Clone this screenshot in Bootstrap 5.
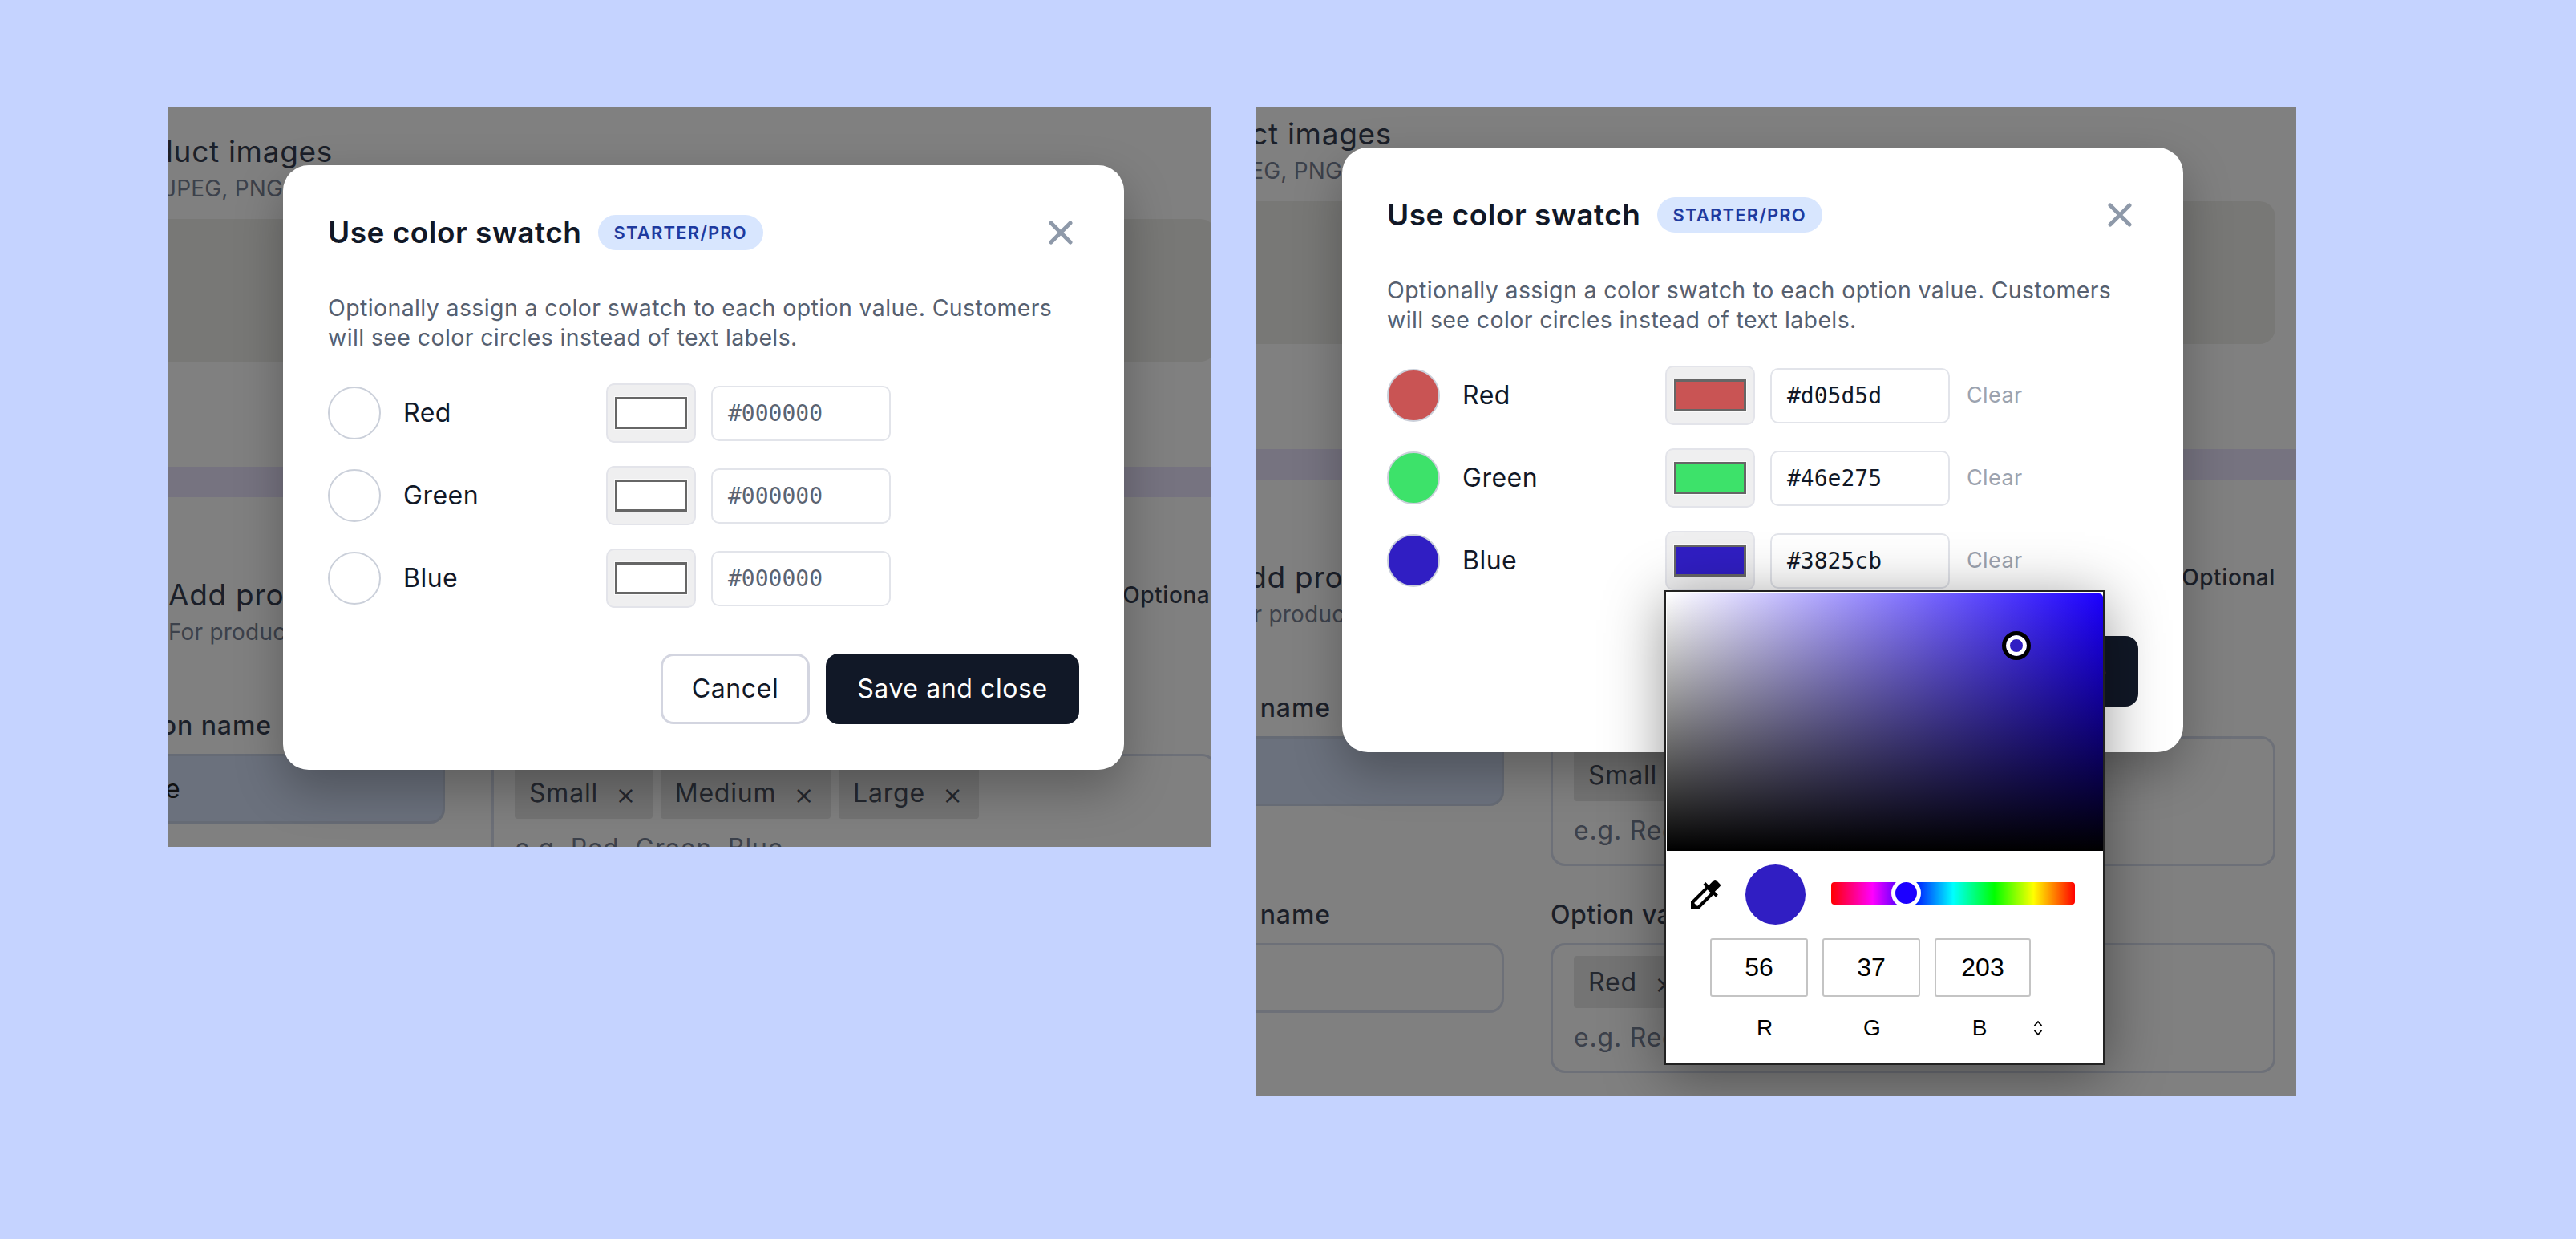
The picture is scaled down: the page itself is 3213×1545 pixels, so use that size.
<!DOCTYPE html>
<html lang="en">
<head>
  <meta charset="UTF-8" />
  <meta name="viewport" content="width=device-width, initial-scale=1.0" />
  <title>Use color swatch</title>
  <link href="https://cdn.jsdelivr.net/npm/bootstrap@5.3.0/dist/css/bootstrap.min.css" rel="stylesheet" />
  <style>
    body {
      background: #c5d3ff;
      font-family: "Inter", "Liberation Sans", sans-serif;
      color: #111827;
      height: 1545px;
      overflow: hidden;
      padding: 133px 0 0 210px;
      gap: 56px;
    }

    /* dimmed page behind each dialog */
    .shot { position: relative; overflow: hidden; background: #808080; flex: none; }
    .shot-a { width: 1300px; height: 923px; }
    .shot-b { width: 1298px; height: 1234px; }
    .pg { width: 1307px; padding-top: 34px; }
    .shot-b .pg { margin: -22px 0 0 -35px; }
    .pg-title { font-size: 37px; line-height: 44px; letter-spacing: .7px; color: #1b1f29; white-space: nowrap; }
    .pg-sub { font-size: 28px; line-height: 37px; letter-spacing: .2px; margin-top: 6px; color: #3c414b; white-space: nowrap; }
    .pg-images { margin-left: -78px; }
    .pg-sub.pg-images { margin-left: -110px; }
    .pg-dropzone { height: 178px; margin: 19px 0 0 -100px; background: #787876; border-radius: 20px; }
    .pg-band { height: 38px; margin: 131px -100px 100px -100px; background: #767380; }
    .pg-optional { font-size: 28px; font-weight: 500; line-height: 44px; letter-spacing: .6px; color: #1b1f29; }
    .pg-grid { display: grid; grid-template-columns: 412px 1fr; column-gap: 58px; margin: 78px 0 41px -67px; }
    .pg-grid + .pg-grid { margin-top: 0; }
    .pg-label { font-size: 32px; font-weight: 500; line-height: 40px; letter-spacing: .5px; color: #1b1f29; margin-bottom: 15px; white-space: nowrap; }
    .pg-name { margin-left: -9px; letter-spacing: .9px; }
    .pg-input { height: 87px; border: 3px solid #6d7078; border-radius: 18px; padding: 0 12px; font-size: 32px; line-height: 81px; letter-spacing: .8px; color: #111; }
    .pg-input-filled { background: #6b717d; border-color: #666b75; }
    .pg-tags { height: 162px; border: 3px solid #6d7078; border-radius: 18px; padding: 13px 26px; font-size: 32px; line-height: 40px; letter-spacing: .8px; color: #3c414b; }
    .pg-chips { gap: 10px; }
    .pg-chip { height: 65px; padding: 0 20px 0 18px; background: #747474; color: #25282f; border-radius: 4px; white-space: nowrap; }
    .pg-chip i { font-style: normal; font-size: 38px; font-weight: 300; margin-left: 22px; }
    .pg-hint { margin-top: 17px; white-space: nowrap; }

    /* dialog */
    .sw-dialog {
      position: absolute;
      width: 1049px;
      padding: 62px 56px 57px;
      background: #fff;
      border: 0;
      border-radius: 32px;
      box-shadow: 0 24px 60px rgba(0, 0, 0, .28);
    }
    .shot-a .sw-dialog { left: 143px; top: 73px; }
    .shot-b .sw-dialog { left: 108px; top: 51px; }
    .sw-title { font-size: 37px; font-weight: 600; line-height: 44px; letter-spacing: .5px; margin: 0; }
    .sw-tier {
      background: #d8e6fe;
      color: #1e3a9f;
      font-size: 22px;
      font-weight: 600;
      line-height: 44px;
      padding: 0 20px;
      margin-left: 20px;
      letter-spacing: 1.2px;
    }
    .sw-close { width: 30px; height: 30px; margin-left: auto; margin-right: 8px; }
    .sw-desc { font-size: 28.5px; line-height: 37px; letter-spacing: .38px; color: #566070; margin: 53px 0 39px; }
    .sw-rows { gap: 29px; }
    .sw-row { height: 74px; }
    .sw-dot { width: 66px; height: 66px; border: 2px solid #cbd0da; border-radius: 50%; flex: none; }
    .sw-name { width: 253px; margin-left: 28px; font-size: 32px; letter-spacing: .5px; flex: none; }
    .sw-well {
      width: 112px;
      height: 74px;
      background: #efeff0;
      border: 2px solid #e3e4ea;
      border-radius: 10px;
      padding: 15px 9px;
      flex: none;
    }
    .sw-fill { display: block; height: 100%; background: #fff; border: 3px solid #666; box-shadow: 0 0 0 1px #fafafa; }
    .sw-hex {
      width: 224px;
      height: 69px;
      margin-left: 19px;
      padding: 0 19px;
      border: 2px solid #e2e4ea;
      border-radius: 10px;
      font-family: "DejaVu Sans Mono", "Liberation Mono", monospace;
      font-size: 28px;
      line-height: 65px;
      color: #5b6473;
    }
    .sw-hex.is-set { color: #111827; }
    .sw-clear { margin-left: 21px; font-size: 27px; letter-spacing: .4px; color: #9ca3af; }
    .sw-foot { gap: 20px; margin-top: 57px; }
    .sw-btn { height: 88px; font-size: 32px; line-height: 1; letter-spacing: .6px; border-radius: 16px; padding: 0; }
    .sw-cancel { width: 186px; background: #fff; color: #111827; border: 3px solid #d3d5e0; }
    .sw-save { width: 316px; background: #111827; color: #fff; border: 0; }

    /* native looking colour picker */
    .cp {
      position: absolute;
      left: 510px;
      top: 603px;
      width: 549px;
      height: 592px;
      background: #fff;
      border: 2px solid #222;
      box-shadow: 0 12px 70px rgba(0, 0, 0, .42);
      font-family: "Liberation Sans", Arial, sans-serif;
      color: #000;
    }
    .cp-area {
      position: relative;
      height: 321px;
      margin: 2px 0 0 1px;
      border-top-right-radius: 5px;
      background: linear-gradient(to bottom, rgba(0, 0, 0, 0), #000), linear-gradient(to right, #fff, #1c00ff);
    }
    .cp-handle {
      position: absolute;
      left: 418px;
      top: 47px;
      width: 36px;
      height: 36px;
      border: 5px solid #000;
      border-radius: 50%;
      background: #301ec3;
      box-shadow: inset 0 0 0 5px #fff;
    }
    .cp-tools { padding: 17px 0 0 31px; }
    .cp-drop { width: 37px; height: 37px; flex: none; }
    .cp-preview { width: 75px; height: 75px; margin-left: 31px; border-radius: 50%; background: #301ec3; flex: none; }
    .cp-hue {
      position: relative;
      width: 304px;
      height: 28px;
      margin: -4px 0 0 32px;
      border-radius: 4px;
      background: linear-gradient(to right, #f00, #f0f 17%, #00f 33%, #0ff 50%, #0f0 67%, #ff0 83%, #f00);
    }
    .cp-thumb {
      position: absolute;
      left: 75px;
      top: -5px;
      width: 37px;
      height: 37px;
      border: 5px solid #fff;
      border-radius: 50%;
      background: #1c00ff;
    }
    .cp-nums { gap: 18px; padding: 17px 0 0 55px; }
    .cp-num {
      width: 122px;
      height: 73px;
      border: 2px solid #c4c4c4;
      border-radius: 3px;
      font-size: 32px;
      line-height: 69px;
      text-align: center;
    }
    .cp-num:last-child { width: 120px; }
    .cp-labels { padding: 23px 0 0 56px; font-size: 28px; line-height: 32px; }
    .cp-labels span { width: 134px; text-align: center; }
  </style>
</head>
<body class="d-flex align-items-start">

  <div class="shot shot-a">
    <div class="pg">
      <div class="pg-title pg-images">Product images</div>
      <div class="pg-sub pg-images">Upload JPEG, PNG, or WebP</div>
      <div class="pg-dropzone"></div>
      <div class="pg-band"></div>
      <div class="d-flex justify-content-between">
        <div class="pg-title">Add product options</div>
        <div class="pg-optional">Optional</div>
      </div>
      <div class="pg-sub">For products with variants</div>
      <div class="pg-grid">
        <div>
          <div class="pg-label pg-name">Option name</div>
          <div class="pg-input pg-input-filled">Size</div>
        </div>
        <div>
          <div class="pg-label">Option values</div>
          <div class="pg-tags">
            <div class="d-flex pg-chips">
              <span class="pg-chip d-flex align-items-center">Small <i>×</i></span>
              <span class="pg-chip d-flex align-items-center">Medium <i>×</i></span>
              <span class="pg-chip d-flex align-items-center">Large <i>×</i></span>
            </div>
            <div class="pg-hint">e.g. Red, Green, Blue</div>
          </div>
        </div>
      </div>
    </div>

    <div class="modal-content sw-dialog">
      <div class="d-flex align-items-center">
        <h5 class="sw-title">Use color swatch</h5>
        <span class="badge rounded-pill sw-tier">STARTER/PRO</span>
        <svg class="sw-close" viewBox="0 0 30 30" fill="none" stroke="#8e99a9" stroke-width="5" stroke-linecap="round"><path d="M3 3l24 24M27 3L3 27"/></svg>
      </div>
      <p class="sw-desc">Optionally assign a color swatch to each option value. Customers will see color circles instead of text labels.</p>
      <div class="d-flex flex-column sw-rows">
        <div class="d-flex align-items-center sw-row">
          <span class="sw-dot"></span><span class="sw-name">Red</span>
          <span class="sw-well"><span class="sw-fill"></span></span>
          <span class="form-control sw-hex">#000000</span>
        </div>
        <div class="d-flex align-items-center sw-row">
          <span class="sw-dot"></span><span class="sw-name">Green</span>
          <span class="sw-well"><span class="sw-fill"></span></span>
          <span class="form-control sw-hex">#000000</span>
        </div>
        <div class="d-flex align-items-center sw-row">
          <span class="sw-dot"></span><span class="sw-name">Blue</span>
          <span class="sw-well"><span class="sw-fill"></span></span>
          <span class="form-control sw-hex">#000000</span>
        </div>
      </div>
      <div class="d-flex justify-content-end sw-foot">
        <button class="btn sw-btn sw-cancel">Cancel</button>
        <button class="btn sw-btn sw-save">Save and close</button>
      </div>
    </div>
  </div>

  <div class="shot shot-b">
    <div class="pg">
      <div class="pg-title pg-images">Product images</div>
      <div class="pg-sub pg-images">Upload JPEG, PNG, or WebP</div>
      <div class="pg-dropzone"></div>
      <div class="pg-band"></div>
      <div class="d-flex justify-content-between">
        <div class="pg-title">Add product options</div>
        <div class="pg-optional">Optional</div>
      </div>
      <div class="pg-sub">For products with variants</div>
      <div class="pg-grid">
        <div>
          <div class="pg-label pg-name">Option name</div>
          <div class="pg-input pg-input-filled">Size</div>
        </div>
        <div>
          <div class="pg-label">Option values</div>
          <div class="pg-tags">
            <div class="d-flex pg-chips">
              <span class="pg-chip d-flex align-items-center">Small <i>×</i></span>
              <span class="pg-chip d-flex align-items-center">Medium <i>×</i></span>
              <span class="pg-chip d-flex align-items-center">Large <i>×</i></span>
            </div>
            <div class="pg-hint">e.g. Red, Green, Blue</div>
          </div>
        </div>
      </div>
      <div class="pg-grid">
        <div>
          <div class="pg-label pg-name">Option name</div>
          <div class="pg-input"></div>
        </div>
        <div>
          <div class="pg-label">Option values</div>
          <div class="pg-tags">
            <div class="d-flex pg-chips">
              <span class="pg-chip d-flex align-items-center">Red <i>×</i></span>
              <span class="pg-chip d-flex align-items-center">Green <i>×</i></span>
              <span class="pg-chip d-flex align-items-center">Blue <i>×</i></span>
            </div>
            <div class="pg-hint">e.g. Red, Green, Blue</div>
          </div>
        </div>
      </div>
    </div>

    <div class="modal-content sw-dialog">
      <div class="d-flex align-items-center">
        <h5 class="sw-title">Use color swatch</h5>
        <span class="badge rounded-pill sw-tier">STARTER/PRO</span>
        <svg class="sw-close" viewBox="0 0 30 30" fill="none" stroke="#8e99a9" stroke-width="5" stroke-linecap="round"><path d="M3 3l24 24M27 3L3 27"/></svg>
      </div>
      <p class="sw-desc">Optionally assign a color swatch to each option value. Customers will see color circles instead of text labels.</p>
      <div class="d-flex flex-column sw-rows">
        <div class="d-flex align-items-center sw-row">
          <span class="sw-dot" style="background:#c95454"></span><span class="sw-name">Red</span>
          <span class="sw-well"><span class="sw-fill" style="background:#c95454"></span></span>
          <span class="form-control sw-hex is-set">#d05d5d</span>
          <span class="sw-clear">Clear</span>
        </div>
        <div class="d-flex align-items-center sw-row">
          <span class="sw-dot" style="background:#3de26a"></span><span class="sw-name">Green</span>
          <span class="sw-well"><span class="sw-fill" style="background:#3de26a"></span></span>
          <span class="form-control sw-hex is-set">#46e275</span>
          <span class="sw-clear">Clear</span>
        </div>
        <div class="d-flex align-items-center sw-row">
          <span class="sw-dot" style="background:#301ec3"></span><span class="sw-name">Blue</span>
          <span class="sw-well"><span class="sw-fill" style="background:#301ec3"></span></span>
          <span class="form-control sw-hex is-set">#3825cb</span>
          <span class="sw-clear">Clear</span>
        </div>
      </div>
      <div class="d-flex justify-content-end sw-foot">
        <button class="btn sw-btn sw-cancel">Cancel</button>
        <button class="btn sw-btn sw-save">Save and close</button>
      </div>
    </div>

    <div class="cp">
      <div class="cp-area"><span class="cp-handle"></span></div>
      <div class="d-flex align-items-center cp-tools">
        <svg class="cp-drop" viewBox="3 3 18 18"><path d="M20.71 5.63l-2.34-2.34c-.39-.39-1.02-.39-1.41 0l-3.12 3.12-1.93-1.91-1.41 1.41 1.42 1.42L3 16.25V21h4.75l8.92-8.92 1.42 1.42 1.41-1.41-1.92-1.92 3.12-3.12c.4-.4.4-1.03.01-1.42zM6.92 19L5 17.08l8.06-8.06 1.92 1.92L6.92 19z"/></svg>
        <span class="cp-preview"></span>
        <div class="cp-hue"><span class="cp-thumb"></span></div>
      </div>
      <div class="d-flex cp-nums">
        <div class="cp-num">56</div>
        <div class="cp-num">37</div>
        <div class="cp-num">203</div>
      </div>
      <div class="d-flex align-items-center cp-labels">
        <span>R</span><span>G</span><span>B</span>
        <svg width="12" height="20" viewBox="0 0 12 20" fill="none" stroke="#000" stroke-width="1.8"><path d="M1.5 7L6 2l4.5 5M1.5 13L6 18l4.5-5"/></svg>
      </div>
    </div>
  </div>

  <script src="https://cdn.jsdelivr.net/npm/bootstrap@5.3.0/dist/js/bootstrap.bundle.min.js"></script>
</body>
</html>
